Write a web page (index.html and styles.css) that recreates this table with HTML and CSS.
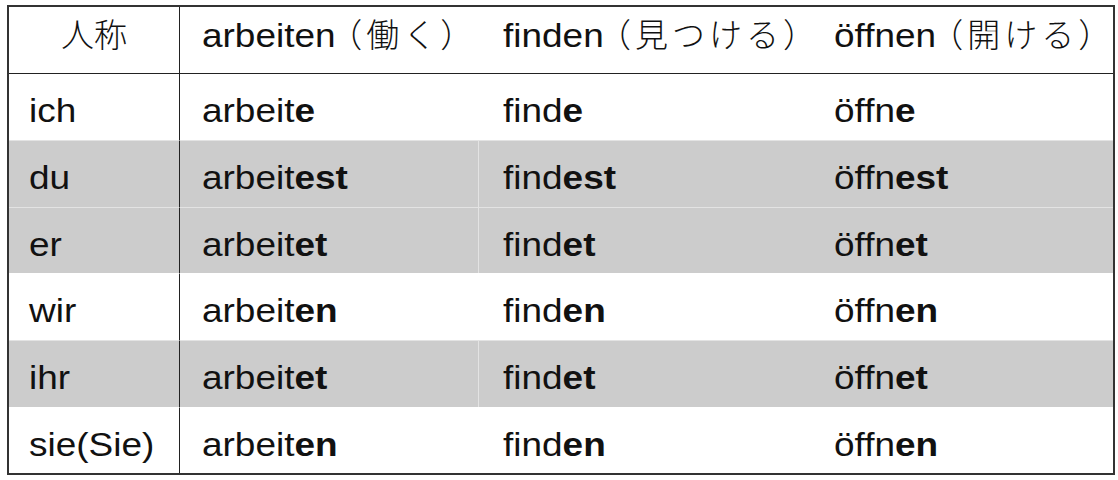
FILE: index.html
```html
<!DOCTYPE html>
<html lang="de">
<head>
<meta charset="utf-8">
<title>Konjugation</title>
<link rel="stylesheet" href="styles.css">
</head>
<body>
<div class="table" role="table">
  <div class="row head" role="row">
    <div class="cell c1 center" role="columnheader"><span class="ja">人称</span></div>
    <div class="cell c2" role="columnheader"><span class="lat w-arb">arbeiten</span><span class="ja">（働く）</span></div>
    <div class="cell c3" role="columnheader"><span class="lat w-fin">finden</span><span class="ja">（見つける）</span></div>
    <div class="cell c4" role="columnheader"><span class="lat w-off">öffnen</span><span class="ja">（開ける）</span></div>
  </div>
  <div class="row" role="row">
    <div class="cell c1" role="cell"><span class="lat">ich</span></div>
    <div class="cell c2" role="cell"><span class="lat">arbeit<b>e</b></span></div>
    <div class="cell c3" role="cell"><span class="lat">find<b>e</b></span></div>
    <div class="cell c4" role="cell"><span class="lat">öffn<b>e</b></span></div>
  </div>
  <div class="row tall gray" role="row">
    <div class="cell c1" role="cell"><span class="lat">du</span></div>
    <div class="cell c2" role="cell"><span class="lat">arbeit<b>est</b></span></div>
    <div class="cell c3" role="cell"><span class="lat">find<b>est</b></span></div>
    <div class="cell c4" role="cell"><span class="lat">öffn<b>est</b></span></div>
  </div>
  <div class="row gray" role="row">
    <div class="cell c1" role="cell"><span class="lat">er</span></div>
    <div class="cell c2" role="cell"><span class="lat">arbeit<b>et</b></span></div>
    <div class="cell c3" role="cell"><span class="lat">find<b>et</b></span></div>
    <div class="cell c4" role="cell"><span class="lat">öffn<b>et</b></span></div>
  </div>
  <div class="row tall" role="row">
    <div class="cell c1" role="cell"><span class="lat">wir</span></div>
    <div class="cell c2" role="cell"><span class="lat">arbeit<b>en</b></span></div>
    <div class="cell c3" role="cell"><span class="lat">find<b>en</b></span></div>
    <div class="cell c4" role="cell"><span class="lat">öffn<b>en</b></span></div>
  </div>
  <div class="row tall gray" role="row">
    <div class="cell c1" role="cell"><span class="lat">ihr</span></div>
    <div class="cell c2" role="cell"><span class="lat">arbeit<b>et</b></span></div>
    <div class="cell c3" role="cell"><span class="lat">find<b>et</b></span></div>
    <div class="cell c4" role="cell"><span class="lat">öffn<b>et</b></span></div>
  </div>
  <div class="row" role="row">
    <div class="cell c1" role="cell"><span class="lat">sie(Sie)</span></div>
    <div class="cell c2" role="cell"><span class="lat">arbeit<b>en</b></span></div>
    <div class="cell c3" role="cell"><span class="lat">find<b>en</b></span></div>
    <div class="cell c4" role="cell"><span class="lat">öffn<b>en</b></span></div>
  </div>
</div>
</body>
</html>
```

FILE: styles.css
```css
html, body {
  margin: 0;
  padding: 0;
  background: #ffffff;
}

body {
  padding: 5px 0 0 7px;
  font-family: "Liberation Sans", "Noto Sans CJK JP", sans-serif;
  color: #111111;
}

.table {
  box-sizing: border-box;
  width: 1108px;
  border: 2px solid #333333;
}

.row {
  display: grid;
  grid-template-columns: 171px 298px 335px 300px;
  height: 66px;
}

.row.tall {
  height: 67px;
}

.row.head {
  box-sizing: border-box;
  height: 67px;
  border-bottom: 1px solid #222222;
}

.row.gray .cell {
  background: #cccccc;
}

.row + .row:not(.head) .cell {
  border-top: 1px solid rgba(255, 255, 255, 0.45);
}

.row.head + .row .cell {
  border-top: none;
}

.cell {
  box-sizing: border-box;
  font-size: 33px;
  line-height: 33px;
  padding-top: 20px;
  white-space: nowrap;
}

.head .cell {
  padding-top: 10px;
}

.lat {
  display: inline-block;
  transform: scaleX(1.12);
  transform-origin: 0 0;
}

.w-arb {
  margin-right: 14px;
}

.w-fin {
  margin-right: 11px;
}

.w-off {
  margin-right: 11px;
}

.c1 {
  padding-left: 20px;
  border-right: 1px solid #222222;
}

.c1.center {
  padding-left: 0;
  text-align: center;
}

.c2 {
  padding-left: 22px;
}

.c3 {
  padding-left: 24px;
  border-left: 1px solid rgba(255, 255, 255, 0.45);
}

.c4 {
  padding-left: 21px;
}

.ja {
  font-family: "Noto Sans CJK JP", sans-serif;
  font-weight: 300;
  letter-spacing: 4px;
}

.head .ja {
  margin-left: -6px;
}

.c1 .ja {
  margin-left: 0;
  letter-spacing: 0;
}

b {
  font-weight: bold;
}
```
